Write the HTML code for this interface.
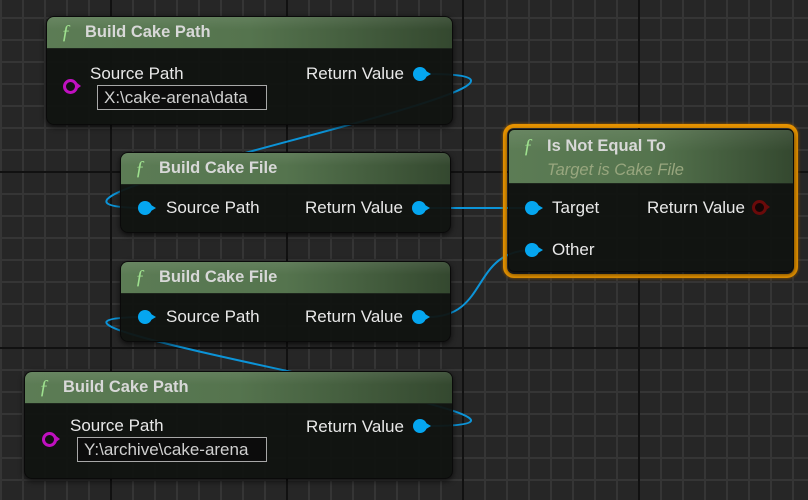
<!DOCTYPE html>
<html><head><style>
body{margin:0;width:808px;height:500px;overflow:hidden;background:#262626;font-family:"Liberation Sans",sans-serif;position:relative}
.grid{position:absolute;inset:0;
background-image:
linear-gradient(90deg,#111 0 2px,transparent 2px),
linear-gradient(0deg,transparent 0,transparent 174px,#111 174px,#111 176px),
linear-gradient(90deg,#353535 0 2px,transparent 2px),
linear-gradient(0deg,transparent 20px,#353535 20px 22px);
background-size:176px 100%,100% 176px,22px 100%,100% 22px;
background-position:110px 0,0 171px,0 0,0 17px;}
.node{position:absolute;border-radius:8px;background:rgba(16,19,16,0.94);box-shadow:0 2px 6px rgba(0,0,0,.7);border:1px solid #0a0a0a;overflow:hidden}
.hdr{height:31px;background:linear-gradient(180deg,rgba(255,255,255,.08),transparent 40%),linear-gradient(90deg,#5c7c55 0%,#55744e 50%,#34482f 100%);border-bottom:1px solid #1d251c;position:relative}
.hdr .f{position:absolute;left:14px;top:4px;color:#9ee08e;font-family:"Liberation Serif",serif;font-style:italic;font-size:20px}
.hdr .t{position:absolute;left:38px;top:6px;color:#d8d8d8;font-weight:bold;font-size:16.5px}
.txt{position:absolute;color:#e8e8e8;font-size:17px;white-space:nowrap}
.pin{position:absolute;width:14px;height:14px;border-radius:50%;background:#05a6f0}
.pin:after{content:"";position:absolute;left:13px;top:4px;border-left:5px solid #05a6f0;border-top:3px solid transparent;border-bottom:3px solid transparent}
.ring{position:absolute;width:9px;height:9px;border-radius:50%;border:3px solid #c010c0;background:#111}
.ring:after{content:"";position:absolute;left:11px;top:1px;border-left:4px solid #c010c0;border-top:3.5px solid transparent;border-bottom:3.5px solid transparent}
.box{position:absolute;border:1px solid #a8a8a8;background:#0c0c0c;color:#d0d0d0;font-size:17px;padding:2px 6px;height:19px;line-height:19px;white-space:nowrap}
</style></head><body>
<div class="grid"></div>
<svg width="808" height="500" style="position:absolute;left:0;top:0">
<g fill="none" stroke="#0c94d8" stroke-width="2">
<path d="M428,74 C650,74 -70,208 148,208"/>
<path d="M428,208 L533,208"/>
<path d="M428,317 C490,317 470,250 533,250"/>
<path d="M428,426 C650,426 -70,317 148,317"/>
</g></svg>

<div class="node" style="left:46px;top:16px;width:405px;height:107px">
<div class="hdr"><span class="f">ƒ</span><span class="t">Build Cake Path</span></div>
</div>
<div class="ring" style="left:63px;top:79px"></div>
<div class="txt" style="left:90px;top:64px">Source Path</div>
<div class="box" style="left:97px;top:85px;width:156px">X:\cake-arena\data</div>
<div class="txt" style="left:306px;top:64px">Return Value</div>
<div class="pin" style="left:413px;top:67px"></div>

<div class="node" style="left:120px;top:152px;width:329px;height:79px">
<div class="hdr"><span class="f">ƒ</span><span class="t">Build Cake File</span></div>
</div>
<div class="pin" style="left:138px;top:201px"></div>
<div class="txt" style="left:166px;top:198px">Source Path</div>
<div class="txt" style="left:305px;top:198px">Return Value</div>
<div class="pin" style="left:412px;top:201px"></div>

<div class="node" style="left:120px;top:261px;width:329px;height:79px">
<div class="hdr"><span class="f">ƒ</span><span class="t">Build Cake File</span></div>
</div>
<div class="pin" style="left:138px;top:310px"></div>
<div class="txt" style="left:166px;top:307px">Source Path</div>
<div class="txt" style="left:305px;top:307px">Return Value</div>
<div class="pin" style="left:412px;top:310px"></div>

<div class="node" style="left:24px;top:371px;width:427px;height:106px">
<div class="hdr"><span class="f">ƒ</span><span class="t">Build Cake Path</span></div>
</div>
<div class="ring" style="left:42px;top:432px"></div>
<div class="txt" style="left:70px;top:416px">Source Path</div>
<div class="box" style="left:77px;top:437px;width:176px">Y:\archive\cake-arena</div>
<div class="txt" style="left:306px;top:417px">Return Value</div>
<div class="pin" style="left:413px;top:419px"></div>

<div style="position:absolute;left:503px;top:124px;width:287px;height:146px;border:4px solid #e89400;border-radius:11px;box-shadow:0 0 3px #a06000"></div>
<div class="node" style="left:508px;top:129px;width:284px;height:141px;border-radius:6px">
<div class="hdr" style="height:53px"><span class="f" style="top:5px">ƒ</span><span class="t" style="top:7px">Is Not Equal To</span>
<span style="position:absolute;left:38px;top:31px;color:#98a67e;font-style:italic;font-size:16.5px">Target is Cake File</span></div>
</div>
<div class="pin" style="left:525px;top:201px"></div>
<div class="txt" style="left:552px;top:198px">Target</div>
<div class="pin" style="left:525px;top:243px"></div>
<div class="txt" style="left:552px;top:240px">Other</div>
<div class="txt" style="left:647px;top:198px">Return Value</div>
<div class="ring" style="left:752px;top:200px;border-color:#6a0a0a;background:#150505"></div>
<style>.ring[style*="6a0a0a"]:after{border-left-color:#6a0a0a}</style>
</body></html>
